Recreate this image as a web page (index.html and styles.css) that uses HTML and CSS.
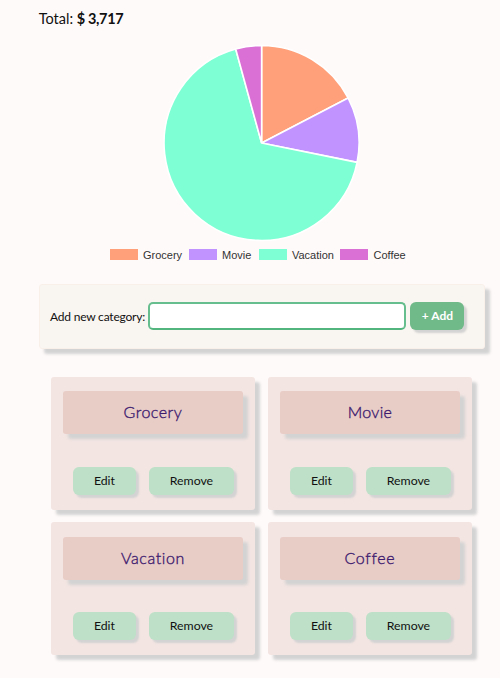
FILE: index.html
```html
<!DOCTYPE html>
<html lang="en">
<head>
<meta charset="utf-8">
<title>Budget categories</title>
<link rel="stylesheet" href="styles.css">
</head>
<body>
<main>
  <p class="total"><span class="total-label">Total:</span> <b class="total-value">$ 3,717</b></p>
  <svg class="pie" width="200" height="200" viewBox="-100 -100 200 200">
    <g transform="translate(-0.4 0)" stroke="#fff" stroke-width="1.6" stroke-linejoin="bevel">
      <path fill="#ffa07a" d="M0 0V-97.5A97.5 97.5 0 0 1 86.5 -45Z"/>
      <path fill="#c193ff" d="M0 0L86.5 -45A97.5 97.5 0 0 1 95.5 19.4Z"/>
      <path fill="#7fffd4" d="M0 0L95.5 19.4A97.5 97.5 0 1 1 -25.9 -94Z"/>
      <path fill="#da70d6" d="M0 0L-25.9 -94A97.5 97.5 0 0 1 0 -97.5Z"/>
    </g>
  </svg>
  <div class="legend">
    <span class="key grocery">Grocery</span>
    <span class="key movie">Movie</span>
    <span class="key vacation">Vacation</span>
    <span class="key coffee">Coffee</span>
  </div>
  <form class="add-form">
    <label for="category">Add new category:</label>
    <input id="category" type="text">
    <button class="add" type="button">+ Add</button>
  </form>
  <section class="cards">
    <article class="card">
      <h2><span class="name-grocery">Grocery</span></h2>
      <div class="actions"><button class="edit" type="button">Edit</button><button class="remove" type="button">Remove</button></div>
    </article>
    <article class="card">
      <h2><span class="name-movie">Movie</span></h2>
      <div class="actions"><button class="edit" type="button">Edit</button><button class="remove" type="button">Remove</button></div>
    </article>
    <article class="card">
      <h2><span class="name-vacation">Vacation</span></h2>
      <div class="actions"><button class="edit" type="button">Edit</button><button class="remove" type="button">Remove</button></div>
    </article>
    <article class="card">
      <h2><span class="name-coffee">Coffee</span></h2>
      <div class="actions"><button class="edit" type="button">Edit</button><button class="remove" type="button">Remove</button></div>
    </article>
  </section>
</main>
</body>
</html>
```
FILE: styles.css
```css
* { box-sizing: border-box; }
body {
  margin: 0;
  height: 678px;
  overflow: hidden;
  background: #fffafa;
  color: #111;
  font-family: Lato, sans-serif;
}
main { width: 446px; margin-left: 38.7px; }
.total { margin: 0; padding-top: 9px; height: 43px; font-size: 14.5px; line-height: 20px; white-space: nowrap; }
.total-value { letter-spacing: -0.35px; }
.pie { display: block; margin: -0.5px 0 0 123.3px; }
.legend {
  display: flex;
  height: 14px;
  margin: 5px 0 0 71.3px;
  font: 11px/14px "Liberation Sans", sans-serif;
  color: #333;
}
.key { display: flex; align-items: center; white-space: nowrap; }
.key::before { content: ""; width: 28px; height: 11px; margin-right: 5px; }
.grocery { width: 79px; }
.movie { width: 70px; }
.vacation { width: 81.5px; }
.grocery::before { background: #ffa07a; }
.movie::before { background: #c193ff; }
.vacation::before { background: #7fffd4; }
.coffee::before { background: #da70d6; }
.add-form {
  display: flex;
  align-items: center;
  height: 65px;
  margin-top: 22.5px;
  padding: 0 0 1px 10.3px;
  border: 1px solid #f9f0ea;
  border-radius: 3px;
  background: #f9f5f0;
  box-shadow: 5px 5px 3px #d3d3d3;
  font-size: 12px;
}
label { width: 98.4px; letter-spacing: -0.2px; white-space: nowrap; }
input {
  width: 258px;
  height: 28px;
  border: 2px solid #66bd8d;
  border-bottom-color: #52b57e;
  border-radius: 5px;
  background: #fff;
}
button {
  height: 28px;
  padding: 0;
  border: 0;
  border-radius: 6px;
  background: #bee0c8;
  box-shadow: 3px 3px 2px #d3d3d3;
  color: #111;
  font: 12.3px/28px Lato, sans-serif;
}
.add { width: 54px; margin-left: 4px; background: #70b988; color: #fff; font-weight: 700; font-size: 12px; }
.cards {
  display: grid;
  grid-template-columns: 204.5px 204.5px;
  grid-template-rows: 133px 133px;
  gap: 12px 12.5px;
  margin: 28px 0 0 12px;
}
.card {
  padding: 14.3px 12.5px 0;
  border-radius: 3px;
  background: #f3e5e2;
  box-shadow: 5px 5px 3px #d3d3d3;
}
.card:nth-child(n+3) { padding-top: 15.3px; }
h2 {
  height: 43px;
  margin: 0;
  border-radius: 3px;
  background: #e8ccc6;
  box-shadow: 5px 5px 3px #d3d3d3;
  color: #3c1a6e;
  font: 300 16px/42px Lato, sans-serif;
  -webkit-text-stroke: 0.35px #3c1a6e;
  text-align: center;
}
.actions { display: flex; gap: 13px; margin: 32.7px 0 0 9.5px; }
.card:nth-child(n+3) .actions { margin-top: 31.7px; }
.edit { width: 63.5px; }
.remove { width: 84.5px; }
.name-grocery { letter-spacing: 0.5px; }
.name-movie { letter-spacing: 0.3px; }
.name-vacation { letter-spacing: 0.6px; }
.name-coffee { letter-spacing: 0.7px; }
```
